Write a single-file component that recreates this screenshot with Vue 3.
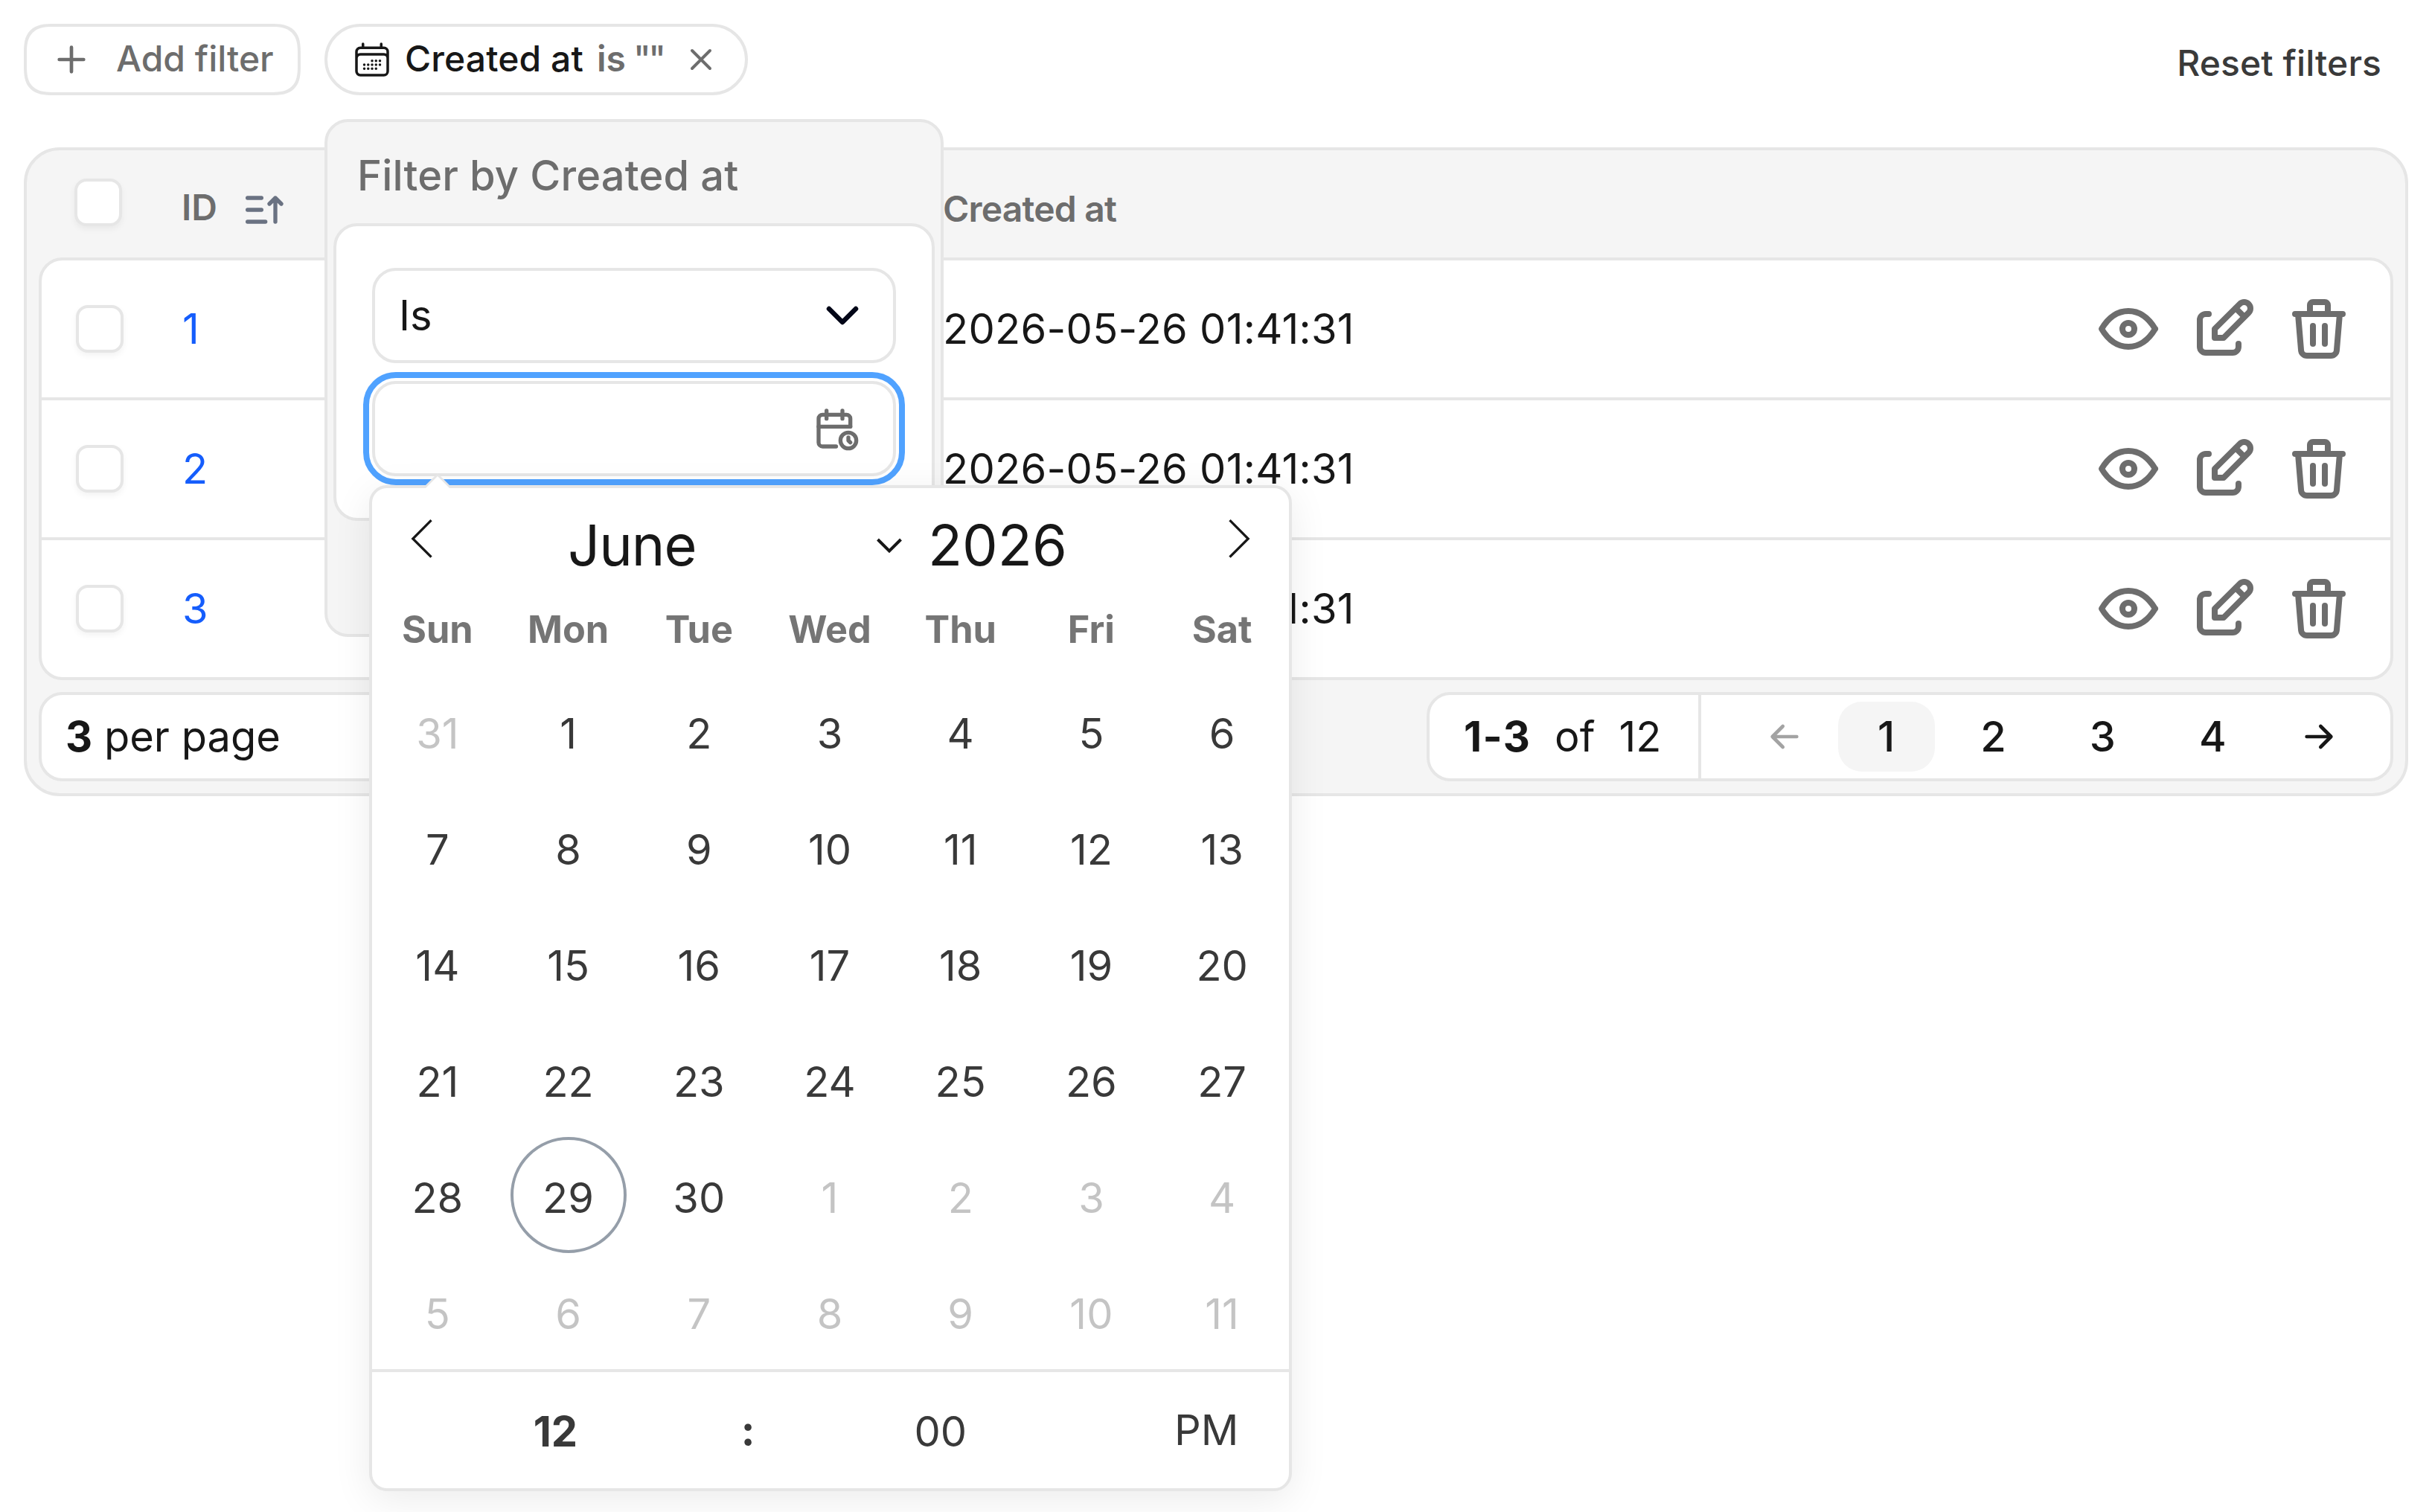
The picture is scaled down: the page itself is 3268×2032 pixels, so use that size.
<template>
  <div class="page">
    <div class="toolbar">
      <button class="add-filter">
        <svg class="icon-56" viewBox="0 0 24 24"><path d="M12 5v14M5 12h14" /></svg>
        <span>Add filter</span>
      </button>

      <div class="filter-wrapper">
        <div class="filter-pill">
          <svg class="pill-calendar" viewBox="0 0 24 24">
            <path d="M6.75 3v2.25M17.25 3v2.25M3 18.75V7.5a2.25 2.25 0 0 1 2.25-2.25h13.5A2.25 2.25 0 0 1 21 7.5v11.25m-18 0A2.25 2.25 0 0 0 5.25 21h13.5A2.25 2.25 0 0 0 21 18.75m-18 0v-7.5A2.25 2.25 0 0 1 5.25 9h13.5A2.25 2.25 0 0 1 21 11.25v7.5m-9-6h.008v.008H12v-.008ZM12 15h.008v.008H12V15Zm0 2.25h.008v.008H12v-.008ZM9.75 15h.008v.008H9.75V15Zm0 2.25h.008v.008H9.75v-.008ZM7.5 15h.008v.008H7.5V15Zm0 2.25h.008v.008H7.5v-.008Zm6.75-4.5h.008v.008h-.008v-.008Zm0 2.25h.008v.008h-.008V15Zm0 2.25h.008v.008h-.008v-.008Zm2.25-4.5h.008v.008H16.5v-.008Zm0 2.25h.008v.008H16.5V15Z" />
          </svg>
          <span class="pill-name">Created at</span>
          <span class="pill-condition">is</span>
          <span class="pill-value">""</span>
          <svg class="pill-close" viewBox="0 0 24 24"><path d="M18 6L6 18M6 6l12 12" /></svg>
        </div>

        <div class="popover">
          <div class="popover-title">Filter by Created at</div>
          <div class="popover-body">
            <div class="field">
              <span>Is</span>
              <svg class="select-chevron" viewBox="0 0 44 28"><path d="M4 5l18 18L40 5" /></svg>
            </div>
            <div class="field field-focused">
              <svg class="field-icon" viewBox="0 0 24 24">
                <path d="M11.795 21H5a2 2 0 0 1-2-2V7a2 2 0 0 1 2-2h12a2 2 0 0 1 2 2v4" />
                <path d="M14 18a4 4 0 1 0 8 0a4 4 0 1 0-8 0M15 3v4M7 3v4M3 11h16M18 16.496V18l1 1" />
              </svg>

              <div class="calendar">
                <div class="calendar-header">
                  <svg class="nav-arrow" viewBox="0 0 17 17">
                    <path d="M5.207 8.471l7.146 7.147-0.707 0.707-7.853-7.854 7.854-7.853 0.707 0.707-7.147 7.146z" />
                  </svg>
                  <div class="month">
                    <span>June</span>
                    <svg class="month-chevron" viewBox="0 0 36 22"><path d="M2.5 3L18 18.5L33.5 3" /></svg>
                  </div>
                  <div class="year">2026</div>
                  <svg class="nav-arrow" viewBox="0 0 17 17">
                    <path d="M13.207 8.472l-7.854 7.854-0.707-0.707 7.146-7.146-7.146-7.148 0.707-0.707 7.854 7.854z" />
                  </svg>
                </div>
                <div class="weekdays">
                  <span v-for="name in weekdays" :key="name">{{ name }}</span>
                </div>
                <div class="days">
                  <span
                    v-for="(day, index) in days"
                    :key="index"
                    class="day"
                    :class="{ outside: day.outside, today: day.today }"
                  >{{ day.label }}</span>
                </div>
                <div class="time">
                  <span class="hour">12</span>
                  <span class="separator">:</span>
                  <span class="minute">00</span>
                  <span class="meridiem">PM</span>
                </div>
              </div>
            </div>
          </div>
        </div>
      </div>

      <a class="reset">Reset filters</a>
    </div>

    <div class="card">
      <div class="table-header">
        <span class="checkbox"></span>
        <div class="header-id">
          <span>ID</span>
          <svg class="sort-icon" viewBox="0 0 24 24"><path d="M4 6h7M4 12h7M4 18h9M15 9l3-3l3 3M18 6v12" /></svg>
        </div>
        <span class="header-date">Created at</span>
      </div>

      <div class="table-body">
        <div v-for="row in rows" :key="row.id" class="row">
          <span class="checkbox"></span>
          <a class="row-id">{{ row.id }}</a>
          <span class="row-date">{{ row.createdAt }}</span>
          <div class="actions">
            <svg v-for="icon in actionIcons" :key="icon.name" class="action" viewBox="0 0 24 24">
              <path :d="icon.path" />
            </svg>
          </div>
        </div>
      </div>

      <div class="footer">
        <div class="per-page"><b>3</b> per page</div>
        <div class="pagination">
          <div class="range"><b>1-3</b><span>of</span><span>12</span></div>
          <div class="pages">
            <svg class="icon-56 prev" viewBox="0 0 24 24"><path d="M5 12h14M5 12l6 6M5 12l6-6" /></svg>
            <span v-for="n in 4" :key="n" class="page-number" :class="{ current: n === 1 }">{{ n }}</span>
            <svg class="icon-56 next" viewBox="0 0 24 24"><path d="M5 12h14M13 18l6-6M13 6l6 6" /></svg>
          </div>
        </div>
      </div>
    </div>
  </div>
</template>

<script setup>
const weekdays = ['Sun', 'Mon', 'Tue', 'Wed', 'Thu', 'Fri', 'Sat'];

// Six full weeks: the last day of May, all of June, then the start of July.
const days = Array.from({ length: 42 }, (_, index) => {
  if (index === 0) return { label: 31, outside: true, today: false };
  if (index > 30) return { label: index - 30, outside: true, today: false };
  return { label: index, outside: false, today: index === 29 };
});

const rows = [
  { id: 1, createdAt: '2026-05-26 01:41:31' },
  { id: 2, createdAt: '2026-05-26 01:41:31' },
  { id: 3, createdAt: '2026-05-26 01:41:31' }
];

const actionIcons = [
  {
    name: 'view',
    path: 'M10 12a2 2 0 1 0 4 0a2 2 0 0 0-4 0M21 12c-2.4 4-5.4 6-9 6c-3.6 0-6.6-2-9-6c2.4-4 5.4-6 9-6c3.6 0 6.6 2 9 6'
  },
  {
    name: 'edit',
    path: 'M7 7H6a2 2 0 0 0-2 2v9a2 2 0 0 0 2 2h9a2 2 0 0 0 2-2v-1M20.385 6.585a2.1 2.1 0 0 0-2.97-2.97L9 12v3h3l8.385-8.415zM16 5l3 3'
  },
  {
    name: 'delete',
    path: 'M4 7h16M10 11v6M14 11v6M5 7l1 12a2 2 0 0 0 2 2h8a2 2 0 0 0 2-2l1-12M9 7V4a1 1 0 0 1 1-1h4a1 1 0 0 1 1 1v3'
  }
];
</script>

<style>
body {
  margin: 0;
  background: #fff;
}
</style>

<style scoped>
.page {
  width: 3268px;
  height: 2032px;
  box-sizing: border-box;
  padding: 32px 32px 0;
  overflow: hidden;
  font-family: Inter, sans-serif;
  font-size: 56px;
  color: #171717;
}

.page * {
  box-sizing: border-box;
}

svg {
  display: block;
  flex-shrink: 0;
  fill: none;
  stroke: currentColor;
  stroke-width: 2;
  stroke-linecap: round;
  stroke-linejoin: round;
}

.icon-56 {
  width: 56px;
  height: 56px;
}

.toolbar {
  display: flex;
  gap: 32px;
  height: 96px;
  margin-bottom: 70px;
  font-size: 48px;
  font-weight: 500;
  line-height: 64px;
}

.add-filter {
  display: flex;
  align-items: center;
  gap: 32px;
  width: 372px;
  height: 96px;
  padding: 0 0 0 32px;
  border: 4px solid #e6e6e6;
  border-radius: 40px;
  corner-shape: superellipse(1.5);
  background: #fff;
  color: #6d6d6d;
  font: inherit;
}

.add-filter span {
  margin-top: -2px;
  white-space: nowrap;
}

.filter-wrapper {
  position: relative;
}

.filter-pill {
  display: flex;
  align-items: center;
  width: 569px;
  height: 96px;
  padding-left: 32px;
  border: 4px solid #e6e6e6;
  border-radius: 48px;
  white-space: nowrap;
}

.filter-pill span {
  margin-top: -2px;
}

.pill-calendar {
  width: 56px;
  height: 56px;
  margin-right: 16px;
  stroke-width: 1.5;
}

.pill-name {
  width: 258px;
  letter-spacing: 0.1px;
}

.pill-condition {
  width: 49px;
  color: #6d6d6d;
  font-weight: 600;
}

.pill-value {
  width: 67px;
  color: #6d6d6d;
  letter-spacing: -3.5px;
}

.pill-close {
  width: 48px;
  height: 48px;
  color: #6d6d6d;
}

.reset {
  margin: 21px 36px 0 auto;
  color: #3a3a3a;
  letter-spacing: 0.1px;
}

/* filter popover */
.popover {
  position: absolute;
  z-index: 10;
  top: 128px;
  left: 0;
  width: 832px;
  height: 696px;
  padding: 0 8px;
  border: 4px solid #e6e6e6;
  border-radius: 32px;
  background: #f5f5f5;
}

.popover-title {
  height: 136px;
  padding: 32px 0 0 32px;
  color: #6d6d6d;
  font-size: 56px;
  line-height: 80px;
  letter-spacing: 0.15px;
}

.popover-body {
  display: flex;
  flex-direction: column;
  gap: 24px;
  height: 400px;
  padding: 56px 48px;
  border: 4px solid #e6e6e6;
  border-radius: 32px;
  background: #fff;
}

.field {
  display: flex;
  align-items: center;
  justify-content: space-between;
  height: 128px;
  padding: 0 46px 0 32px;
  border: 4px solid #e6e6e6;
  border-radius: 32px;
  background: #fff;
  font-size: 56px;
  font-weight: 400;
}

.select-chevron {
  width: 44px;
  height: 28px;
  color: #020617;
  stroke-width: 6.5;
}

.field-focused {
  position: relative;
  justify-content: flex-end;
  padding-right: 44px;
  outline: 8px solid #50a2ff;
  outline-offset: 4px;
}

.field-icon {
  width: 64px;
  height: 64px;
  color: #6d6d6d;
}

/* date picker */
.calendar {
  position: absolute;
  top: 136px;
  left: -8px;
  width: 1240px;
  height: 1352px;
  border: 4px solid #e6e6e6;
  border-radius: 24px;
  background: #fff;
  box-shadow: 0 12px 52px rgba(0, 0, 0, 0.08);
}

.calendar::before,
.calendar::after {
  content: '';
  position: absolute;
  bottom: 100%;
  left: 88px;
  border: solid transparent;
  transform: translateX(-50%);
}

.calendar::before {
  border-width: 0 20px 20px;
  border-bottom-color: #e6e6e6;
}

.calendar::after {
  margin-bottom: -4px;
  border-width: 0 20px 20px;
  border-bottom-color: #fff;
}

.calendar-header {
  display: flex;
  align-items: flex-start;
  height: 136px;
  padding: 0 40px;
  font-size: 75.6px;
  line-height: 92px;
}

.nav-arrow {
  width: 56px;
  height: 56px;
  margin-top: 40px;
  fill: currentColor;
  stroke: none;
}

.month {
  display: flex;
  align-items: center;
  justify-content: space-between;
  width: 450px;
  margin: 31px 0 0 167px;
  letter-spacing: -1px;
}

.month-chevron {
  width: 36px;
  height: 22px;
  stroke-width: 4;
  stroke-linecap: butt;
  stroke-linejoin: miter;
}

.year {
  width: 423px;
  padding-left: 34px;
  margin-top: 31px;
}

.weekdays {
  display: grid;
  grid-template-columns: repeat(7, 1fr);
  height: 112px;
  padding-right: 2px;
  color: #757575;
  font-size: 50.4px;
  font-weight: 700;
  line-height: 107px;
  text-align: center;
}

.days {
  display: grid;
  grid-template-columns: repeat(7, 1fr);
  justify-items: center;
  padding-right: 2px;
}

.day {
  width: 156px;
  height: 156px;
  border: 4px solid transparent;
  border-radius: 50%;
  color: #393939;
  line-height: 156px;
  text-align: center;
}

.day.today {
  border-color: #959ea9;
}

.day.outside {
  color: #c4c4c4;
}

.time {
  display: flex;
  height: 160px;
  border-top: 4px solid #e6e6e6;
  color: #393939;
  line-height: 160px;
  text-align: center;
}

.hour {
  width: 40%;
  font-weight: 700;
}

.separator {
  width: 2%;
  margin-top: -2px;
  font-weight: 700;
}

.minute {
  width: 40%;
}

.meridiem {
  width: 18%;
  margin-top: -2px;
}

/* table */
.card {
  height: 872px;
  padding: 0 16px;
  border: 4px solid #e6e6e6;
  border-radius: 48px;
  background: #f5f5f5;
}

.table-header {
  display: grid;
  grid-template-columns: 144px 1023px 1fr;
  align-items: center;
  height: 144px;
  padding-left: 48px;
  color: #6d6d6d;
  font-size: 48px;
  font-weight: 600;
}

.table-header .checkbox {
  margin-top: -4px;
}

.header-id {
  display: flex;
  align-items: center;
  padding-top: 9px;
}

.sort-icon {
  width: 64px;
  height: 64px;
  margin: 7px 0 0 30px;
  color: #6a7282;
}

.header-date {
  padding-top: 12px;
  letter-spacing: -0.8px;
}

.checkbox {
  width: 64px;
  height: 64px;
  border: 4px solid #e6e6e6;
  border-radius: 16px;
  background: #fff;
  box-shadow: 0 4px 8px rgba(0, 0, 0, 0.05);
}

.table-body {
  height: 568px;
  border: 4px solid #e6e6e6;
  border-radius: 32px;
  background: #fff;
}

.row {
  display: grid;
  grid-template-columns: 143px 1022px 1fr auto;
  align-items: center;
  height: 188px;
  padding: 0 48px 0 46px;
  border-bottom: 4px solid #e6e6e6;
}

.row:last-child {
  height: 184px;
  border-bottom: none;
}

.row-id {
  color: #155dfc;
}

.row-date {
  letter-spacing: 0.28px;
}

.actions {
  display: flex;
  gap: 32px;
  color: #6d6d6d;
}

.action {
  width: 96px;
  height: 96px;
}

.footer {
  display: flex;
  justify-content: space-between;
  margin-top: 16px;
}

.per-page {
  width: 640px;
  height: 120px;
  padding-left: 32px;
  border: 4px solid #e6e6e6;
  border-radius: 32px;
  background: #fff;
  line-height: 112px;
}

.pagination {
  display: flex;
  width: 1299px;
  height: 120px;
  border: 4px solid #e6e6e6;
  border-radius: 32px;
  background: #fff;
}

.range {
  display: flex;
  width: 365px;
  padding-left: 46px;
  gap: 32px;
  border-right: 4px solid #e6e6e6;
  line-height: 112px;
}

.range b {
  letter-spacing: 1.3px;
}

.pages {
  display: flex;
  align-items: center;
  padding-left: 84px;
  font-weight: 500;
}

.page-number {
  height: 94px;
  padding: 0 52px;
  margin-right: 8px;
  border-radius: 32px;
  line-height: 94px;
}

.page-number.current {
  padding: 0 54px 0 53px;
  margin-right: 9px;
  background: #f5f5f5;
}

.prev {
  margin-right: 44px;
  color: #a3a3a3;
}

.next {
  margin-left: 36px;
}
</style>
